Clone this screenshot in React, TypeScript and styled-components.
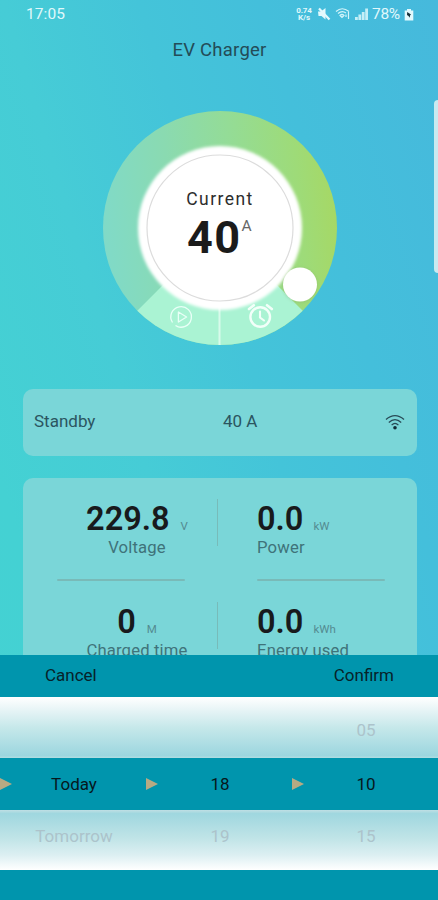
import React from "react";
import styled, { createGlobalStyle } from "styled-components";

const GlobalStyle = createGlobalStyle`
  * { box-sizing: border-box; }
  body { margin: 0; font-family: Roboto, "Liberation Sans", sans-serif; }
`;

const Screen = styled.div`
  position: relative;
  width: 438px;
  height: 900px;
  overflow: hidden;
  background: linear-gradient(73deg, #44d2d2 0%, #44d1d3 18%, #46ccd6 39%, #44c4d9 58%, #44bfdb 75%, #46b9dc 100%);
`;

const StatusBar = styled.header`
  display: flex;
  align-items: center;
  justify-content: space-between;
  height: 28px;
  padding: 0 24px 0 26px;
  color: #e0f8fb;
  font-size: 15.5px;
  letter-spacing: 0.1px;
`;

const StatusIcons = styled.div`
  display: flex;
  align-items: center;
  gap: 4px;
  svg { display: block; }
`;

const Speed = styled.div`
  width: 18px;
  font-size: 8px;
  font-weight: 700;
  line-height: 7.5px;
  text-align: center;
  letter-spacing: -0.1px;
`;

const Battery = styled.span`
  width: 28px;
  white-space: nowrap;
  letter-spacing: -0.3px;
  font-size: 15.5px;
`;

const Title = styled.h1`
  margin: 10px 0 0;
  padding-left: 1px;
  line-height: 24px;
  font-size: 18.5px;
  font-weight: 400;
  text-align: center;
  color: #234c57;
  letter-spacing: 0.25px;
`;

const Dial = styled.section`
  display: grid;
  width: 240px;
  height: 240px;
  margin: 46px 0 0 100px;
  > * { grid-area: 1 / 1; }
`;

const Reading = styled.div`
  z-index: 1;
  display: flex;
  flex-direction: column;
  align-items: center;
  padding-top: 80px;
`;

const ReadingLabel = styled.span`
  line-height: 22px;
  font-size: 17.5px;
  letter-spacing: 1.45px;
  color: #2d2d2d;
`;

const ReadingValue = styled.div`
  display: flex;
  align-items: flex-start;
  margin-top: 3px;
  line-height: 50px;
  font-size: 45px;
  font-weight: 700;
  letter-spacing: 1.4px;
  color: #1b1b1b;
`;

const Amp = styled.sup`
  line-height: 24px;
  padding-top: 1px;
  font-size: 15.5px;
  font-weight: 400;
  color: #666;
`;

const Card = styled.section`
  width: 394px;
  margin-left: 23px;
  border-radius: 10px;
  background: #7ad6d8;
`;

const StateCard = styled(Card)`
  display: grid;
  grid-template-columns: 189px 1fr auto;
  align-items: center;
  height: 67px;
  margin-top: 41px;
  padding: 0 12px 3px 11px;
  font-size: 17px;
  color: #2b5560;
  svg { margin-top: 3px; }
`;

const MetricsCard = styled(Card)`
  display: grid;
  grid-template-columns: 161px 167px;
  grid-auto-rows: 103px;
  height: 240px;
  margin-top: 22px;
  padding: 21px 0 0 34px;
`;

const Metric = styled.div<{ $side: "left" | "right" }>`
  display: flex;
  flex-direction: column;
  align-items: ${(p) => (p.$side === "left" ? "center" : "flex-start")};
  height: 47px;
  padding-left: ${(p) => (p.$side === "right" ? 39 : 0)}px;
  border-right: ${(p) => (p.$side === "left" ? "1px solid #78bbb9" : "none")};
`;

const MetricValue = styled.div`
  flex: none;
  height: 40px;
  line-height: 40px;
  font-size: 32.5px;
  font-weight: 600;
  color: #181a1c;
  white-space: nowrap;
`;

const Unit = styled.span<{ $tight: boolean }>`
  margin-left: ${(p) => (p.$tight ? 10 : 11)}px;
  font-size: 11.5px;
  font-weight: 400;
  color: #548b91;
`;

const MetricLabel = styled.div`
  flex: none;
  line-height: 20px;
  margin-top: -1px;
  font-size: 16.7px;
  letter-spacing: 0.15px;
  color: #3f737a;
`;

const Rule = styled.hr`
  align-self: flex-start;
  flex: none;
  width: 128px;
  height: 2px;
  margin: 21px 0 0;
  border: 0;
  border-radius: 1px;
  background: #79bab8;
`;

const Sheet = styled.div`
  position: absolute;
  left: 0;
  right: 0;
  bottom: 0;
  height: 245px;
  background: #0095ad;
  color: #072229;
  font-size: 17px;
`;

const SheetBar = styled.div`
  display: flex;
  justify-content: space-between;
  height: 42px;
  padding: 0 44px 0 45px;
`;

const SheetButton = styled.button`
  padding: 0 0 2px;
  border: 0;
  background: none;
  color: inherit;
  font: inherit;
`;

const PickerRow = styled.div<{ $tone: "above" | "active" | "below" }>`
  display: grid;
  grid-template-columns: repeat(3, 146px);
  align-items: center;
  height: ${(p) => (p.$tone === "active" ? 52 : p.$tone === "above" ? 61 : 60)}px;
  padding-top: ${(p) => (p.$tone === "above" ? 4 : 0)}px;
  padding-bottom: ${(p) => (p.$tone === "below" ? 9 : 0)}px;
  color: ${(p) => (p.$tone === "active" ? "#06181d" : "#acc3cb")};
  background: ${(p) =>
    p.$tone === "above"
      ? "linear-gradient(#ffffff, #e4f3f5 24%, #c6e8ea 50%, #9cd6df 96%, #b1dce2)"
      : p.$tone === "below"
      ? "linear-gradient(#c0dfe4, #9fd7df 6%, #c0e4e7 47%, #dceff2 75%, #ffffff)"
      : "#0095ad"};
`;

const PickerCell = styled.div`
  display: grid;
  grid-template-columns: 12px 1fr;
  align-items: center;
  text-align: center;
`;

const PickerText = styled.span`
  grid-column: 2;
  padding-right: 10px;
`;

const Arrow = styled.i`
  width: 0;
  border-left: 12px solid #b7aa83;
  border-top: 6px solid transparent;
  border-bottom: 6px solid transparent;
`;

const DialArt = () => (
  <svg width="240" height="240" viewBox="100 108 240 240" aria-hidden="true">
    <defs>
      <linearGradient id="ring" x1="0" y1="0.55" x2="1" y2="0.45">
        <stop offset="0" stopColor="#80dac8" />
        <stop offset="0.3" stopColor="#8adab1" />
        <stop offset="0.58" stopColor="#94dc96" />
        <stop offset="0.85" stopColor="#9edb78" />
        <stop offset="1" stopColor="#a6d865" />
      </linearGradient>
      <filter id="glow" x="-10%" y="-10%" width="120%" height="120%">
        <feGaussianBlur stdDeviation="1.5" />
      </filter>
    </defs>
    <circle cx="220" cy="228" r="117" fill="url(#ring)" />
    <path d="M220 228 L137.3 310.7 A117 117 0 0 0 302.7 310.7Z" fill="#aaf3d3" />
    <path d="M219.5 306V345" stroke="#d8faeb" strokeWidth="2" />
    <circle cx="220" cy="228" r="82" fill="#fff" filter="url(#glow)" />
    <circle cx="220" cy="228" r="73" fill="#fff" stroke="#dcdcdc" strokeWidth="1.2" />
    <circle cx="300" cy="285" r="17.5" fill="#8aac70" opacity="0.35" filter="url(#glow)" />
    <circle cx="300" cy="284.5" r="17" fill="#fff" />
    <g fill="none" stroke="#e9fff7" strokeWidth="1.3" strokeLinejoin="round">
      <path d="M172.5 322.5A10.3 10.3 0 1 1 175.5 325.5M177.5 326.7A10.3 10.3 0 0 0 181.5 327.3" />
      <path d="M178.4 312V322L186.6 317Z" />
    </g>
    <g fill="none" stroke="#f2fff9" strokeWidth="2.4" strokeLinecap="round">
      <circle cx="260.2" cy="317" r="9.8" />
      <path d="M260 311.5V317.5L264 320.5" strokeWidth="2.1" />
      <path d="M249 309L253.8 305.2M267 305.2L271.8 309" strokeWidth="2.6" />
    </g>
  </svg>
);

const CardWifi = () => (
  <svg width="20" height="17" viewBox="0 0 20 17" fill="none" stroke="#284b57" strokeWidth="1.3">
    <path d="M1 5.6Q10-2.3 19 5.6M3.8 8.4Q10 2.8 16.2 8.4M6.6 11.1Q10 7.7 13.4 11.1" />
    <circle cx="10" cy="13.7" r="1.8" fill="#122d38" stroke="none" />
  </svg>
);

const MuteIcon = () => (
  <svg width="14" height="14" viewBox="0 0 14 14" fill="#e2f9fd">
    <path d="M1 4.5H4L8.5 1V12.5L4.5 9H1.5Z" />
    <path d="M2 1.5L12.5 12.5" stroke="#e2f9fd" strokeWidth="2.2" />
  </svg>
);

const StatusWifi = () => (
  <svg width="16" height="14" viewBox="0 0 16 14" fill="none" stroke="#d3f4fa" strokeWidth="1.2">
    <path d="M1 4.5Q7-1 14 4.5M3 6.5Q7 3 11 6M5 8.5Q7 6.5 9 8.5L7 10.5ZM13.5 5V12M11 7.5V10" />
  </svg>
);

const SignalIcon = () => (
  <svg width="13" height="12" viewBox="0 0 13 12" fill="#c4eff7">
    <path d="M0 9H2.8V12H0ZM3.4 6.5H6.2V12H3.4ZM6.8 4H9.6V12H6.8ZM10.2 .5H13V12H10.2Z" />
  </svg>
);

const BatteryIcon = () => (
  <svg width="10" height="13" viewBox="0 0 10 13">
    <path d="M3 1H7V2.4H9.3V12.5H.7V2.4H3Z" fill="#e2f9fd" />
    <path d="M3.2 4L7 6.5L6 7.5L5.8 9.7L4.5 8L3 7Z" fill="#18323b" />
  </svg>
);

/* Handle of the system edge panel, floating over the right border. */
const EdgeHandle = styled.div`
  position: absolute;
  top: 100px;
  right: -6px;
  width: 10px;
  height: 173px;
  border-radius: 4px;
  background: #c9eaf0;
`;

const metrics = [
  { value: "229.8", unit: "V", label: "Voltage" },
  { value: "0.0", unit: "kW", label: "Power" },
  { value: "0", unit: "M", label: "Charged time" },
  { value: "0.0", unit: "kWh", label: "Energy used" },
];

const rows: { tone: "above" | "active" | "below"; cells: string[] }[] = [
  { tone: "above", cells: ["", "", "05"] },
  { tone: "active", cells: ["Today", "18", "10"] },
  { tone: "below", cells: ["Tomorrow", "19", "15"] },
];

export default function App() {
  return (
    <>
      <GlobalStyle />
      <Screen>
        <StatusBar>
          <span>17:05</span>
          <StatusIcons>
            <Speed>0.74 K/s</Speed>
            <MuteIcon />
            <StatusWifi />
            <SignalIcon />
            <Battery>78%</Battery>
            <BatteryIcon />
          </StatusIcons>
        </StatusBar>
        <Title>EV Charger</Title>
        <Dial>
          <DialArt />
          <Reading>
            <ReadingLabel>Current</ReadingLabel>
            <ReadingValue>
              40<Amp>A</Amp>
            </ReadingValue>
          </Reading>
        </Dial>
        <StateCard>
          <span>Standby</span>
          <span>40 A</span>
          <CardWifi />
        </StateCard>
        <MetricsCard>
          {metrics.map((m, i) => (
            <Metric key={m.label} $side={i % 2 ? "right" : "left"}>
              <MetricValue>
                {m.value}
                <Unit $tight={i % 2 === 1}>{m.unit}</Unit>
              </MetricValue>
              <MetricLabel>{m.label}</MetricLabel>
              {i < 2 && <Rule />}
            </Metric>
          ))}
        </MetricsCard>
        <EdgeHandle />
        <Sheet>
          <SheetBar>
            <SheetButton>Cancel</SheetButton>
            <SheetButton>Confirm</SheetButton>
          </SheetBar>
          {rows.map((row) => (
            <PickerRow key={row.tone} $tone={row.tone}>
              {row.cells.map((cell, i) => (
                <PickerCell key={i}>
                  {row.tone === "active" && <Arrow />}
                  <PickerText>{cell}</PickerText>
                </PickerCell>
              ))}
            </PickerRow>
          ))}
        </Sheet>
      </Screen>
    </>
  );
}
